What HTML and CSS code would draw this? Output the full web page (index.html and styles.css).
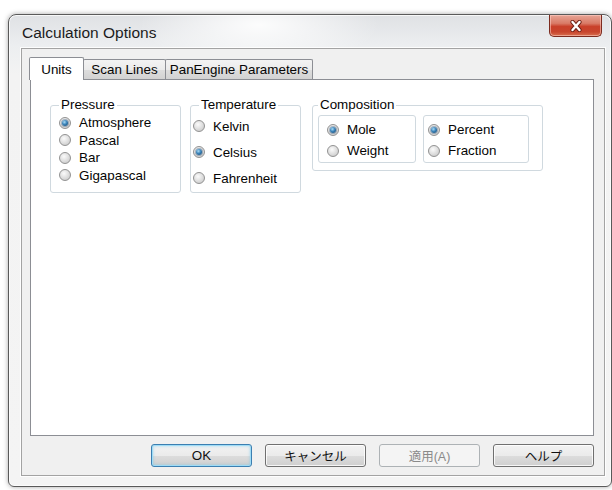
FILE: index.html
```html
<!DOCTYPE html>
<html lang="en">
<head>
<meta charset="utf-8">
<title>Calculation Options</title>
<link rel="stylesheet" href="styles.css">
</head>
<body>
<div class="window">
  <div class="titlebar">
    <span class="title">Calculation Options</span>
    <button class="close" type="button" aria-label="Close">
      <svg width="14" height="12" viewBox="0 0 14 12">
        <path d="M3.5 2 L10.5 10 M10.5 2 L3.5 10" stroke="#6d2116" stroke-width="4.2" stroke-linecap="round"/>
        <path d="M3.5 2 L10.5 10 M10.5 2 L3.5 10" stroke="#ffffff" stroke-width="2.4" stroke-linecap="round"/>
      </svg>
    </button>
  </div>

  <div class="client">
    <div class="tabs">
      <div class="tab tab-units active">Units</div>
      <div class="tab tab-scan">Scan Lines</div>
      <div class="tab tab-engine">PanEngine Parameters</div>
    </div>

    <div class="panel">
      <fieldset class="group pressure">
        <legend>Pressure</legend>
        <div class="rows">
          <label class="radio"><span class="mark on"></span>Atmosphere</label>
          <label class="radio"><span class="mark"></span>Pascal</label>
          <label class="radio"><span class="mark"></span>Bar</label>
          <label class="radio"><span class="mark"></span>Gigapascal</label>
        </div>
      </fieldset>

      <fieldset class="group temperature">
        <legend>Temperature</legend>
        <div class="rows">
          <label class="radio"><span class="mark"></span>Kelvin</label>
          <label class="radio"><span class="mark on"></span>Celsius</label>
          <label class="radio"><span class="mark"></span>Fahrenheit</label>
        </div>
      </fieldset>

      <fieldset class="group composition">
        <legend>Composition</legend>
        <div class="subgroups">
          <div class="subgroup basis">
            <label class="radio"><span class="mark on"></span>Mole</label>
            <label class="radio"><span class="mark"></span>Weight</label>
          </div>
          <div class="subgroup scale">
            <label class="radio"><span class="mark on"></span>Percent</label>
            <label class="radio"><span class="mark"></span>Fraction</label>
          </div>
        </div>
      </fieldset>
    </div>

    <div class="buttons">
      <button class="btn default" type="button">OK</button>
      <button class="btn" type="button">キャンセル</button>
      <button class="btn disabled" type="button">適用(A)</button>
      <button class="btn" type="button">ヘルプ</button>
    </div>
  </div>
</div>
</body>
</html>
```

FILE: styles.css
```css
* {
  box-sizing: border-box;
}

html,
body {
  margin: 0;
}

body {
  width: 612px;
  height: 490px;
  overflow: hidden;
  background: #ffffff;
  font-family: "Liberation Sans", "Noto Sans CJK JP", sans-serif;
  font-size: 13.4px;
  color: #050505;
}

/* Aero-style window frame */
.window {
  margin: 14px 0 0 8px;
  width: 604px;
  height: 473px;
  display: flex;
  flex-direction: column;
  border: 1px solid #5a5a5a;
  border-radius: 8px 8px 6px 6px;
  background:
    radial-gradient(ellipse 120px 40px at 250px 10px, rgba(255, 255, 255, 0.9), rgba(255, 255, 255, 0)),
    linear-gradient(#dfe1e4 0, #eceef0 30px, #f3f3f3 60px, #f4f4f4 100%);
  box-shadow:
    0 0 5px rgba(0, 0, 0, 0.35),
    inset 0 0 0 1px rgba(255, 255, 255, 0.75);
}

.titlebar {
  height: 33px;
  flex: none;
  display: flex;
  justify-content: space-between;
  align-items: flex-start;
  padding-left: 13px;
}

.title {
  margin-top: 10px;
  font-size: 15.5px;
  line-height: 16px;
  color: #1c1c1c;
}

.close {
  width: 53px;
  height: 22px;
  margin: 0 9px 0 0;
  padding: 0;
  display: flex;
  align-items: center;
  justify-content: center;
  border: 1px solid #7c2b1f;
  border-top: none;
  border-radius: 0 0 5px 5px;
  background: linear-gradient(#e7a596 0%, #d97a66 40%, #c9402a 55%, #c8452d 80%, #d8704f 100%);
  box-shadow: inset 0 0 0 1px rgba(255, 210, 200, 0.55);
}

/* client area inside the frame */
.client {
  flex: 1;
  margin: 0 6px 10px 12px;
  padding: 8px 10px 8px 8px;
  display: flex;
  flex-direction: column;
  border: 1px solid #a3a3a3;
  background: #f0f0f0;
  box-shadow: 0 0 0 1px rgba(255, 255, 255, 0.85);
}

/* tab strip */
.tabs {
  height: 22px;
  flex: none;
  display: flex;
  align-items: flex-end;
}

.tab {
  position: relative;
  height: 20px;
  margin-left: -1px;
  padding-top: 2px;
  text-align: center;
  line-height: 16px;
  border: 1px solid #8c8e94;
  border-bottom: none;
  border-radius: 2px 2px 0 0;
  background: linear-gradient(#f3f3f3 0%, #ebebeb 50%, #dedede 50%, #d2d2d2 100%);
}

.tab.active {
  z-index: 1;
  height: 23px;
  margin-bottom: -1px;
  padding-top: 4px;
  background: #ffffff;
}

.tab-units {
  width: 55px;
}

.tab-scan {
  width: 83px;
}

.tab-engine {
  width: 148px;
}

/* tab page */
.panel {
  height: 357px;
  flex: none;
  display: flex;
  align-items: flex-start;
  padding: 17px 0 0 19px;
  border: 1px solid #8c8e94;
  background: #ffffff;
}

.group {
  margin: 0;
  padding: 0;
  min-width: 0;
  border: 1px solid #d0d9df;
  border-radius: 3px;
}

.group legend {
  padding: 0 2px;
  margin-left: 8px;
  line-height: 16px;
}

.pressure {
  width: 131px;
  height: 96px;
}

.pressure .rows {
  padding: 1px 0 0 8px;
}

.pressure .radio {
  height: 17.5px;
}

.temperature {
  width: 111px;
  height: 96px;
  margin-left: 9px;
}

.temperature .rows {
  padding: 0 0 0 2px;
}

.temperature .radio {
  height: 26px;
}

.composition {
  width: 231px;
  height: 74px;
  margin-left: 11px;
}

.composition legend {
  margin-left: 5px;
}

.subgroups {
  display: flex;
  gap: 7px;
  padding: 2px 0 0 5px;
}

.subgroup {
  height: 48px;
  padding-top: 3px;
  border: 1px solid #d0d9df;
  border-radius: 3px;
}

.subgroup .radio {
  height: 21px;
}

.basis {
  width: 98px;
  padding-left: 8px;
}

.scale {
  width: 106px;
  padding-left: 4px;
}

/* radio buttons */
.radio {
  display: flex;
  align-items: center;
  gap: 8px;
  white-space: nowrap;
}

.mark {
  position: relative;
  flex: none;
  width: 12px;
  height: 12px;
  border-radius: 50%;
  border: 1px solid #929292;
  background: radial-gradient(circle at 40% 35%, #fbfbfb 0%, #dcdcdc 55%, #c2c2c2 100%);
}

.mark.on::after {
  content: "";
  position: absolute;
  left: 2px;
  top: 2px;
  width: 6px;
  height: 6px;
  border-radius: 50%;
  background: radial-gradient(circle at 40% 35%, #a9dcf7 0%, #3a82b8 45%, #114068 100%);
  box-shadow: 0 0 0 1px rgba(30, 70, 110, 0.35);
}

/* dialog buttons */
.buttons {
  height: 23px;
  margin-top: 8px;
  flex: none;
  display: flex;
  justify-content: flex-end;
  gap: 13px;
}

.btn {
  width: 101px;
  height: 23px;
  padding: 0;
  border: 1px solid #707070;
  border-radius: 3px;
  background: linear-gradient(#f2f2f2 0%, #ebebeb 50%, #dddddd 50%, #cfcfcf 100%);
  box-shadow: inset 0 0 0 1px rgba(255, 255, 255, 0.8);
  font-family: "Liberation Sans", "Noto Sans CJK JP", sans-serif;
  font-size: 12.5px;
  color: #111111;
}

.btn.default {
  border-color: #3c7fb1;
  box-shadow: inset 0 0 0 1px #9fdcf6, inset 0 0 3px 1px rgba(80, 190, 240, 0.45);
  font-size: 13.4px;
}

.btn.disabled {
  border-color: #adb2b5;
  background: #f4f4f4;
  box-shadow: none;
  color: #8a8a8a;
}
```
